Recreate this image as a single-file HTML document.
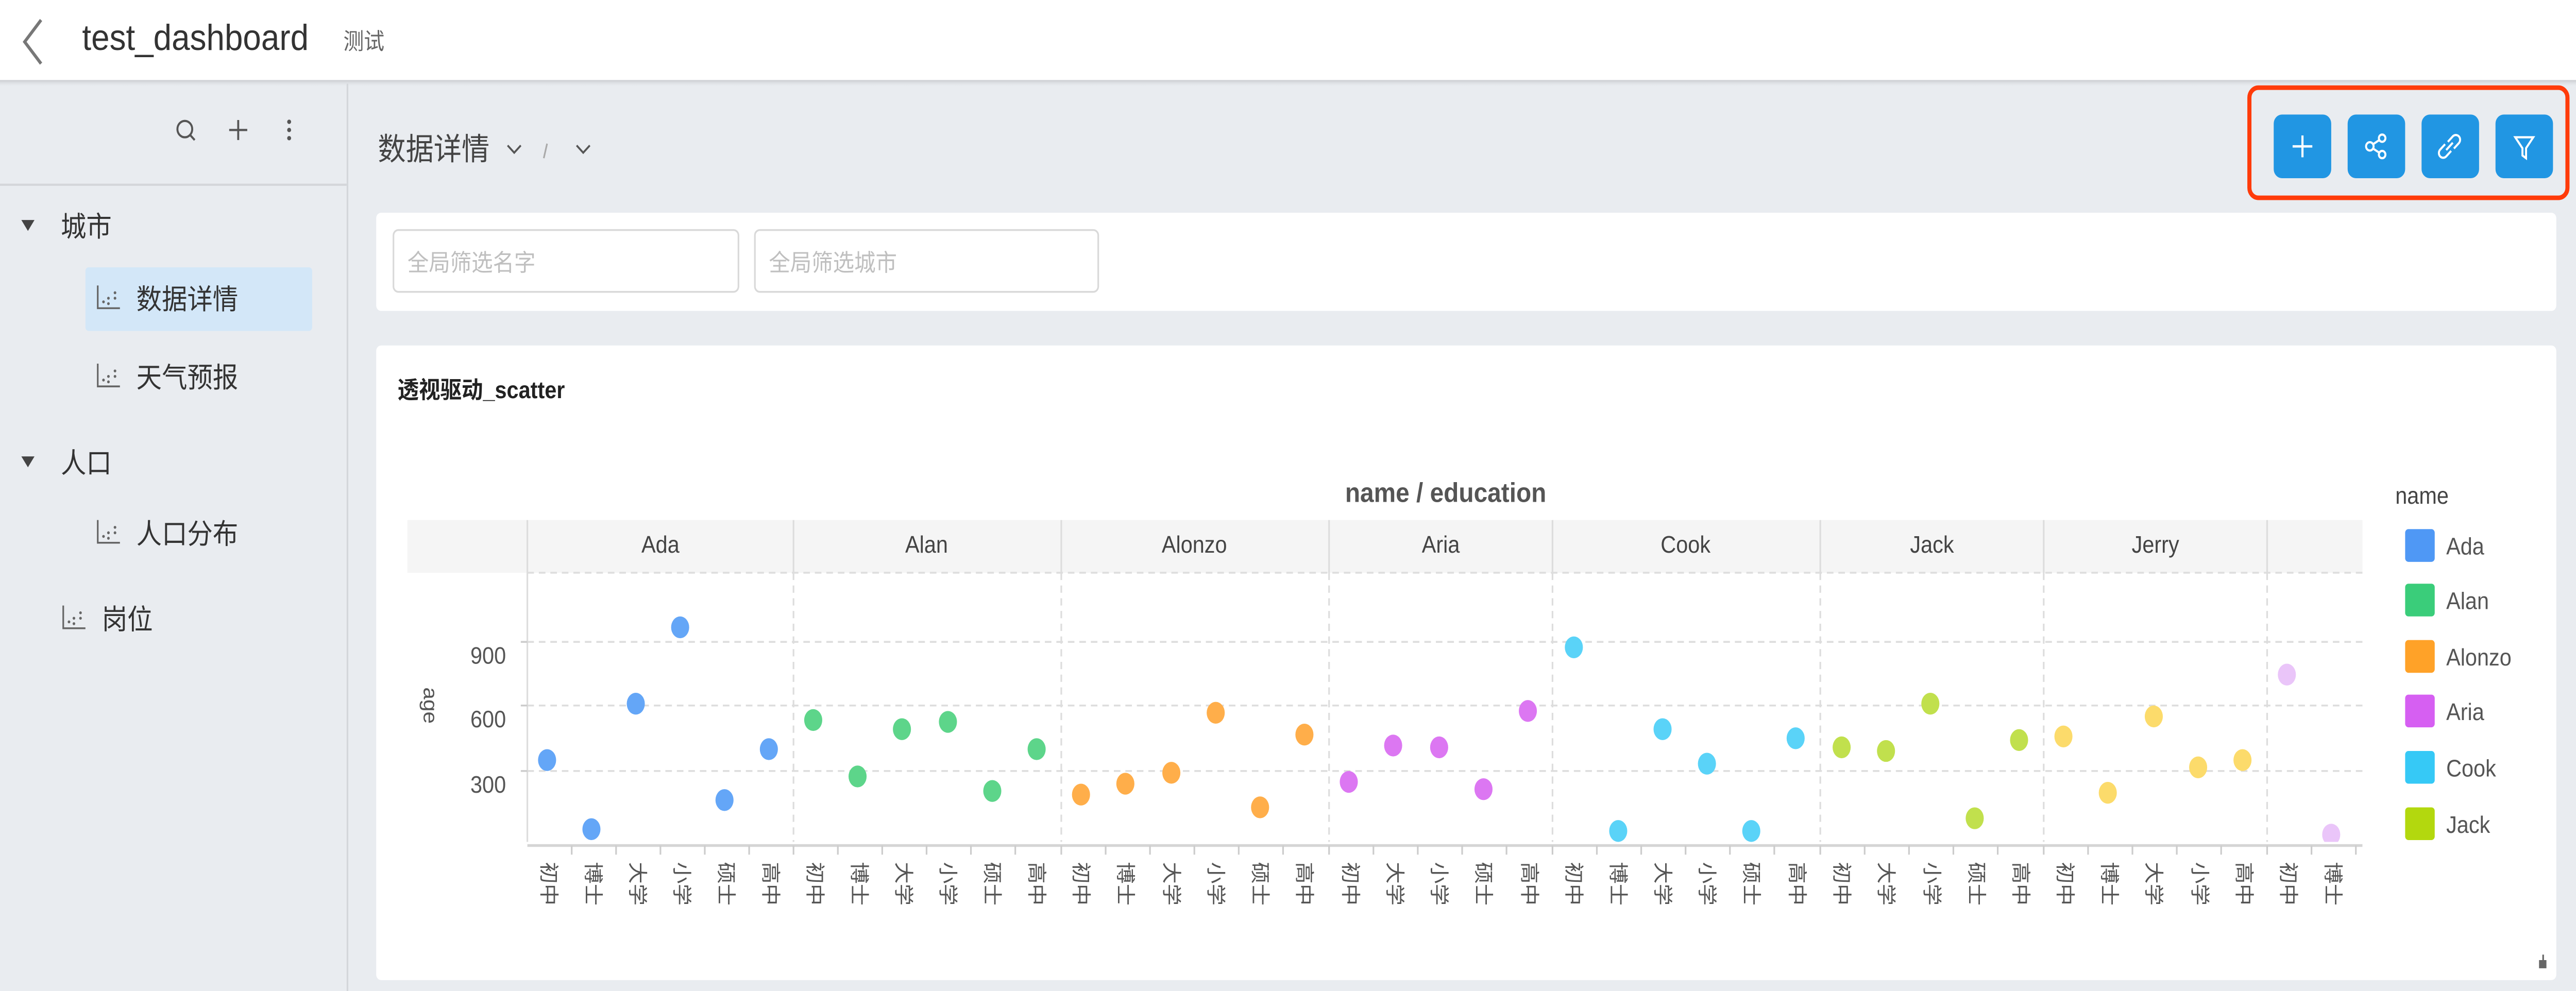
<!DOCTYPE html>
<html><head><meta charset="utf-8">
<style>
html,body{margin:0;padding:0;width:100%;height:100%;overflow:hidden;background:#e9ecf0;}
svg#r{position:fixed;left:0;top:0;width:100vw;height:100vh;display:block;}
text{font-family:"Liberation Sans","Noto Sans CJK SC",sans-serif;}
</style></head><body>
<svg id="r" viewBox="0 0 1568 545" preserveAspectRatio="none" xmlns="http://www.w3.org/2000/svg">
  <defs>
    <linearGradient id="sh" x1="0" y1="0" x2="0" y2="1"><stop offset="0" stop-color="#c9cbcf"/><stop offset="1" stop-color="#e9ecf0" stop-opacity="0"/></linearGradient>
    <clipPath id="pc"><rect x="321" y="315" width="1117" height="148"/></clipPath>
  </defs>
  <rect x="0" y="0" width="1568" height="545" fill="#e9ecf0"/>
  <!-- header -->
  <rect x="0" y="44" width="1568" height="4" fill="url(#sh)"/>
  <rect x="0" y="0" width="1568" height="44" fill="#fff"/>
  <path d="M25 11 L15 23 L25 35" fill="none" stroke="#777" stroke-width="1.8"/>
  <text x="50" y="27.5" font-size="20" fill="#333">test_dashboard</text>
  <text x="209" y="27" font-size="12.5" fill="#666">测试</text>
  <!-- sidebar -->
  <rect x="211" y="46" width="1" height="499" fill="#d4d7db"/>
  <rect x="0" y="101" width="211" height="1.2" fill="#d4d6da"/>
  <g fill="none" stroke="#555" stroke-width="1.2">
    <circle cx="112.5" cy="71" r="4.5"/><path d="M115.7 74.2 L118.5 77"/>
    <path d="M145 66 V77 M139.5 71.5 H150.5"/>
  </g>
  <g fill="#555"><circle cx="176" cy="67" r="1.2"/><circle cx="176" cy="71.5" r="1.2"/><circle cx="176" cy="76" r="1.2"/></g>
  <path d="M13 121 H21 L17 127 Z" fill="#444"/>
  <text x="37" y="130" font-size="15.5" fill="#333">城市</text>
  <rect x="52" y="147" width="138" height="35" rx="2" fill="#d3e7f8"/>
  <text x="83" y="170" font-size="15.5" fill="#333">数据详情</text>
  <text x="83" y="213" font-size="15.5" fill="#333">天气预报</text>
  <path d="M13 251 H21 L17 257 Z" fill="#444"/>
  <text x="37" y="260" font-size="15.5" fill="#333">人口</text>
  <text x="83" y="299" font-size="15.5" fill="#333">人口分布</text>
  <text x="62" y="346" font-size="15.5" fill="#333">岗位</text>
  <g fill="none" stroke="#666" stroke-width="1"><path d="M59.5 157 V169.5 H73"/><path d="M59.5 200 V212.5 H73"/><path d="M59.5 286 V298.5 H73"/><path d="M38.5 333 V345.5 H52"/></g>
  <g fill="#666">
    <circle cx="63" cy="166" r=".8"/><circle cx="66" cy="164" r=".8"/><circle cx="70" cy="161" r=".8"/><circle cx="66" cy="167" r=".8"/><circle cx="70" cy="164" r=".8"/>
    <circle cx="63" cy="209" r=".8"/><circle cx="66" cy="207" r=".8"/><circle cx="70" cy="204" r=".8"/><circle cx="66" cy="210" r=".8"/><circle cx="70" cy="207" r=".8"/>
    <circle cx="63" cy="295" r=".8"/><circle cx="66" cy="293" r=".8"/><circle cx="70" cy="290" r=".8"/><circle cx="66" cy="296" r=".8"/><circle cx="70" cy="293" r=".8"/>
    <circle cx="42" cy="342" r=".8"/><circle cx="45" cy="340" r=".8"/><circle cx="49" cy="337" r=".8"/><circle cx="45" cy="343" r=".8"/><circle cx="49" cy="340" r=".8"/>
  </g>
  <!-- breadcrumb -->
  <text x="230" y="88" font-size="17" fill="#444">数据详情</text>
  <path d="M309 80 L313 84 L317 80" fill="none" stroke="#555" stroke-width="1.1"/>
  <path d="M333 79 L331 87" stroke="#aaa" stroke-width="1"/>
  <path d="M351 80 L355 84 L359 80" fill="none" stroke="#555" stroke-width="1.1"/>
  <!-- red box + buttons -->
  <rect x="1369.2" y="48.2" width="193.6" height="60.6" rx="5.5" fill="none" stroke="#ff3b0a" stroke-width="2.5"/>
  <g fill="#2196e3">
    <rect x="1384" y="63" width="35" height="35" rx="5"/><rect x="1429" y="63" width="35" height="35" rx="5"/>
    <rect x="1474" y="63" width="35" height="35" rx="5"/><rect x="1519" y="63" width="35" height="35" rx="5"/>
  </g>
  <g fill="none" stroke="#fff" stroke-width="1.2">
    <path d="M1401.5 74.5 V86.5 M1395.5 80.5 H1407.5" stroke-width="1.3"/>
    <circle cx="1442.5" cy="80.5" r="2.3"/><circle cx="1450" cy="76" r="2"/><circle cx="1450" cy="85" r="2"/><path d="M1444.5 79.3 L1448.3 77 M1444.5 81.7 L1448.3 84"/>
    <path d="M1490 78 L1493 75 a2.6 2.6 0 0 1 3.7 3.7 L1493.7 81.7"/><path d="M1492 83 L1489 86 a2.6 2.6 0 0 1 -3.7 -3.7 L1488.3 79.3"/><path d="M1489 82.5 L1493 78.5"/>
    <path d="M1531 75.5 H1542 L1537.6 81.5 V87 L1535.4 85.5 V81.5 Z"/>
  </g>
  <!-- filter panel -->
  <rect x="229" y="117" width="1327" height="54" rx="3" fill="#fff"/>
  <rect x="239.5" y="126.5" width="210" height="34" rx="3" fill="#fff" stroke="#d9d9d9"/>
  <rect x="459.5" y="126.5" width="209" height="34" rx="3" fill="#fff" stroke="#d9d9d9"/>
  <text x="248" y="149" font-size="13" fill="#bfbfbf">全局筛选名字</text>
  <text x="468" y="149" font-size="13" fill="#bfbfbf">全局筛选城市</text>
  <!-- chart card -->
  <rect x="229" y="190" width="1327" height="349" rx="3" fill="#fff"/>
  <text x="242" y="219" font-size="13" font-weight="bold" fill="#222">透视驱动_scatter</text>
  <text x="880" y="276" text-anchor="middle" font-size="15" font-weight="bold" fill="#555">name / education</text>
  <rect x="248" y="286" width="1190" height="29" fill="#f5f5f5"/>
  <g stroke="#ddd" stroke-width="1">
    <path d="M321 286 V315 M483 286 V315 M646 286 V315 M809 286 V315 M945 286 V315 M1108 286 V315 M1244 286 V315 M1380 286 V315"/>
    <path d="M321 315 V463"/>
  </g>
  <path d="M321 465 H1438" stroke="#d5d5d5" stroke-width="1.5"/>
  <g stroke="#ddd" stroke-width="1" stroke-dasharray="4 3">
    <path d="M321 315 H1438 M321 353 H1438 M321 388 H1438 M321 424 H1438"/>
    <path d="M483 315 V463 M646 315 V463 M809 315 V463 M945 315 V463 M1108 315 V463 M1244 315 V463 M1380 315 V463"/>
  </g>
  <path d="M317 353 H321 M317 388 H321 M317 424 H321" stroke="#ccc"/>
  <g font-size="13" fill="#444" text-anchor="middle">
    <text x="402" y="304">Ada</text><text x="564" y="304">Alan</text><text x="727" y="304">Alonzo</text><text x="877" y="304">Aria</text><text x="1026" y="304">Cook</text><text x="1176" y="304">Jack</text><text x="1312" y="304">Jerry</text>
  </g>
  <g font-size="13" fill="#555" text-anchor="end"><text x="308" y="365">900</text><text x="308" y="400">600</text><text x="308" y="436">300</text></g>
  <text transform="translate(258,388) rotate(90)" font-size="12" fill="#555" text-anchor="middle">age</text>
  <path stroke="#ccc" stroke-width="1" d="M348 465V470M375 465V470M402 465V470M429 465V470M456 465V470M483 465V470M510 465V470M537 465V470M564 465V470M591 465V470M618 465V470M646 465V470M673 465V470M700 465V470M727 465V470M754 465V470M781 465V470M809 465V470M836 465V470M863 465V470M890 465V470M917 465V470M945 465V470M972 465V470M999 465V470M1026 465V470M1053 465V470M1080 465V470M1108 465V470M1135 465V470M1162 465V470M1189 465V470M1216 465V470M1244 465V470M1271 465V470M1298 465V470M1325 465V470M1352 465V470M1380 465V470M1407 465V470M1434 465V470"/>
  <g font-size="12" fill="#555" dominant-baseline="central">
    <text transform="translate(334,474) rotate(90)">初中</text><text transform="translate(361,474) rotate(90)">博士</text><text transform="translate(388,474) rotate(90)">大学</text><text transform="translate(415,474) rotate(90)">小学</text><text transform="translate(442,474) rotate(90)">硕士</text><text transform="translate(469,474) rotate(90)">高中</text>
    <text transform="translate(496,474) rotate(90)">初中</text><text transform="translate(523,474) rotate(90)">博士</text><text transform="translate(550,474) rotate(90)">大学</text><text transform="translate(577,474) rotate(90)">小学</text><text transform="translate(604,474) rotate(90)">硕士</text><text transform="translate(631,474) rotate(90)">高中</text>
    <text transform="translate(658,474) rotate(90)">初中</text><text transform="translate(685,474) rotate(90)">博士</text><text transform="translate(713,474) rotate(90)">大学</text><text transform="translate(740,474) rotate(90)">小学</text><text transform="translate(767,474) rotate(90)">硕士</text><text transform="translate(794,474) rotate(90)">高中</text>
    <text transform="translate(822,474) rotate(90)">初中</text><text transform="translate(849,474) rotate(90)">大学</text><text transform="translate(876,474) rotate(90)">小学</text><text transform="translate(903,474) rotate(90)">硕士</text><text transform="translate(931,474) rotate(90)">高中</text>
    <text transform="translate(958,474) rotate(90)">初中</text><text transform="translate(985,474) rotate(90)">博士</text><text transform="translate(1012,474) rotate(90)">大学</text><text transform="translate(1039,474) rotate(90)">小学</text><text transform="translate(1066,474) rotate(90)">硕士</text><text transform="translate(1094,474) rotate(90)">高中</text>
    <text transform="translate(1121,474) rotate(90)">初中</text><text transform="translate(1148,474) rotate(90)">大学</text><text transform="translate(1176,474) rotate(90)">小学</text><text transform="translate(1203,474) rotate(90)">硕士</text><text transform="translate(1230,474) rotate(90)">高中</text>
    <text transform="translate(1257,474) rotate(90)">初中</text><text transform="translate(1284,474) rotate(90)">博士</text><text transform="translate(1311,474) rotate(90)">大学</text><text transform="translate(1339,474) rotate(90)">小学</text><text transform="translate(1366,474) rotate(90)">高中</text>
    <text transform="translate(1393,474) rotate(90)">初中</text><text transform="translate(1420,474) rotate(90)">博士</text>
  </g>
  <g clip-path="url(#pc)">
    <g fill="#64a6f7"><ellipse cx="333" cy="418" rx="5.5" ry="6"/><ellipse cx="360" cy="456" rx="5.5" ry="6"/><ellipse cx="387" cy="387" rx="5.5" ry="6"/><ellipse cx="414" cy="345" rx="5.5" ry="6"/><ellipse cx="441" cy="440" rx="5.5" ry="6"/><ellipse cx="468" cy="412" rx="5.5" ry="6"/></g>
    <g fill="#5dd58a"><ellipse cx="495" cy="396" rx="5.5" ry="6"/><ellipse cx="522" cy="427" rx="5.5" ry="6"/><ellipse cx="549" cy="401" rx="5.5" ry="6"/><ellipse cx="577" cy="397" rx="5.5" ry="6"/><ellipse cx="604" cy="435" rx="5.5" ry="6"/><ellipse cx="631" cy="412" rx="5.5" ry="6"/></g>
    <g fill="#ffae4a"><ellipse cx="658" cy="437" rx="5.5" ry="6"/><ellipse cx="685" cy="431" rx="5.5" ry="6"/><ellipse cx="713" cy="425" rx="5.5" ry="6"/><ellipse cx="740" cy="392" rx="5.5" ry="6"/><ellipse cx="767" cy="444" rx="5.5" ry="6"/><ellipse cx="794" cy="404" rx="5.5" ry="6"/></g>
    <g fill="#dc77f2"><ellipse cx="821" cy="430" rx="5.5" ry="6"/><ellipse cx="848" cy="410" rx="5.5" ry="6"/><ellipse cx="876" cy="411" rx="5.5" ry="6"/><ellipse cx="903" cy="434" rx="5.5" ry="6"/><ellipse cx="930" cy="391" rx="5.5" ry="6"/></g>
    <g fill="#5ad3f8"><ellipse cx="958" cy="356" rx="5.5" ry="6"/><ellipse cx="985" cy="457" rx="5.5" ry="6"/><ellipse cx="1012" cy="401" rx="5.5" ry="6"/><ellipse cx="1039" cy="420" rx="5.5" ry="6"/><ellipse cx="1066" cy="457" rx="5.5" ry="6"/><ellipse cx="1093" cy="406" rx="5.5" ry="6"/></g>
    <g fill="#c1e04d"><ellipse cx="1121" cy="411" rx="5.5" ry="6"/><ellipse cx="1148" cy="413" rx="5.5" ry="6"/><ellipse cx="1175" cy="387" rx="5.5" ry="6"/><ellipse cx="1202" cy="450" rx="5.5" ry="6"/><ellipse cx="1229" cy="407" rx="5.5" ry="6"/></g>
    <g fill="#fcdb6b"><ellipse cx="1256" cy="405" rx="5.5" ry="6"/><ellipse cx="1283" cy="436" rx="5.5" ry="6"/><ellipse cx="1311" cy="394" rx="5.5" ry="6"/><ellipse cx="1338" cy="422" rx="5.5" ry="6"/><ellipse cx="1365" cy="418" rx="5.5" ry="6"/></g>
    <g fill="#eac5f9"><ellipse cx="1392" cy="371" rx="5.5" ry="6"/><ellipse cx="1419" cy="459" rx="5.5" ry="6"/></g>
  </g>
  <text x="1458" y="277" font-size="13" fill="#444">name</text>
  <rect x="1464" y="291" width="18" height="18" rx="2" fill="#4f98f5"/><text x="1489" y="305" font-size="13" fill="#555">Ada</text>
  <rect x="1464" y="321" width="18" height="18" rx="2" fill="#3acd7a"/><text x="1489" y="335" font-size="13" fill="#555">Alan</text>
  <rect x="1464" y="352" width="18" height="18" rx="2" fill="#ffa228"/><text x="1489" y="366" font-size="13" fill="#555">Alonzo</text>
  <rect x="1464" y="382" width="18" height="18" rx="2" fill="#d65ff2"/><text x="1489" y="396" font-size="13" fill="#555">Aria</text>
  <rect x="1464" y="413" width="18" height="18" rx="2" fill="#36c9f6"/><text x="1489" y="427" font-size="13" fill="#555">Cook</text>
  <rect x="1464" y="444" width="18" height="18" rx="2" fill="#b3d80e"/><text x="1489" y="458" font-size="13" fill="#555">Jack</text>
  <path d="M1546 528.5 H1549.5 V532 H1546 Z M1548 525 V532" fill="#666" stroke="#666" stroke-width="1"/>
</svg>
</body></html>
